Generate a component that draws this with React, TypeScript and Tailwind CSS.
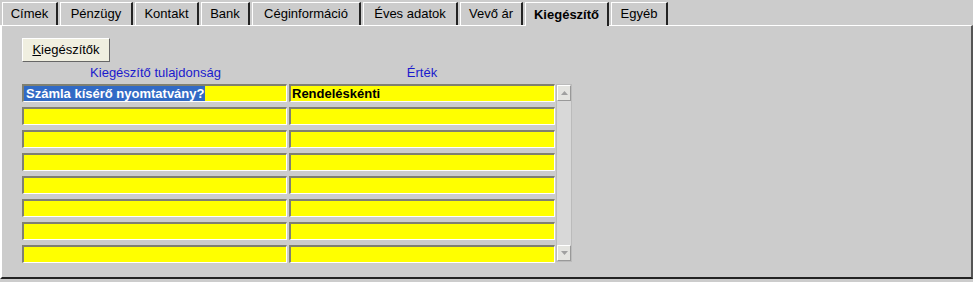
const tabs = ["Címek", "Pénzügy", "Kontakt", "Bank", "Céginformáció", "Éves adatok", "Vevő ár", "Kiegészítő", "Egyéb"];
const widths = [56, 73, 64, 49, 109, 95, 63, 84, 57];

function Field({ children }: { children?: React.ReactNode }) {
  return (
    <div className="h-[18px] bg-[#ffff00] border-t-2 border-l-2 border-t-[#808070] border-l-[#808070] border-b border-r border-b-white border-r-white flex items-center font-bold text-[13px] leading-none overflow-hidden whitespace-nowrap">
      {children}
    </div>
  );
}

export default function App() {
  return (
    <div className="w-[973px] h-[282px] bg-[#cccccc] text-black" style={{ fontFamily: '"Liberation Sans", Arial, sans-serif' }}>
      <div className="flex h-[25px] pl-[2px] pt-[2px] items-end">
        {tabs.map((t, i) => {
          const active = t === "Kiegészítő";
          return (
            <div
              key={t}
              style={{ width: widths[i] }}
              className={`mr-[2px] h-[23px] flex items-center justify-center text-[13px] border-l border-t border-l-white border-t-white border-r-2 border-r-[#222] ${active ? "font-bold h-[24px] bg-[#cccccc] -mb-px relative z-10" : "bg-[#cccccc]"}`}
            >
              {t}
            </div>
          );
        })}
      </div>
      <div className="h-[254px] border-t border-l-2 border-t-white border-l-white border-r-2 border-r-[#555] border-b-2 border-b-[#222] pl-[20px] pt-[12px]">
        <button className="w-[88px] h-[24px] bg-[#f0efe0] border border-t-white border-l-white border-r-[#666] border-b-[#666] text-[13px] flex items-center justify-center">
          <span><span className="underline">K</span>iegészítők</span>
        </button>
        <div className="flex mt-[3px] h-[16px] leading-[16px] w-[533px] text-[13px] text-[#1a1acc]">
          <div className="w-[267px] text-center">Kiegészítő tulajdonság</div>
          <div className="w-[266px] text-center">Érték</div>
        </div>
        <div className="flex mt-[3px]">
          <div className="w-[533px] grid grid-cols-[265px_266px] gap-x-[2px] gap-y-[5px]">
            <Field>
              <span className="bg-[#316ac5] text-white h-full flex items-center pl-[2px] pr-[1px]">Számla kísérő nyomtatvány?</span>
            </Field>
            <Field><span className="pl-[1px]">Rendeléskénti</span></Field>
            {Array.from({ length: 14 }).map((_, i) => (
              <Field key={i} />
            ))}
          </div>
          <div className="w-[16px] h-[178px] ml-[1px] bg-[#d8d8d8] border border-[#bbb] flex flex-col justify-between">
            <div className="h-[16px] bg-[#e4e4e0] border border-t-white border-l-white border-r-[#999] border-b-[#999] flex items-center justify-center">
              <svg width="7" height="4" viewBox="0 0 7 4"><path d="M0 4L3.5 0L7 4Z" fill="#a0a0a0" /></svg>
            </div>
            <div className="h-[16px] bg-[#e4e4e0] border border-t-white border-l-white border-r-[#999] border-b-[#999] flex items-center justify-center">
              <svg width="7" height="4" viewBox="0 0 7 4"><path d="M0 0L3.5 4L7 0Z" fill="#a0a0a0" /></svg>
            </div>
          </div>
        </div>
      </div>
    </div>
  );
}
